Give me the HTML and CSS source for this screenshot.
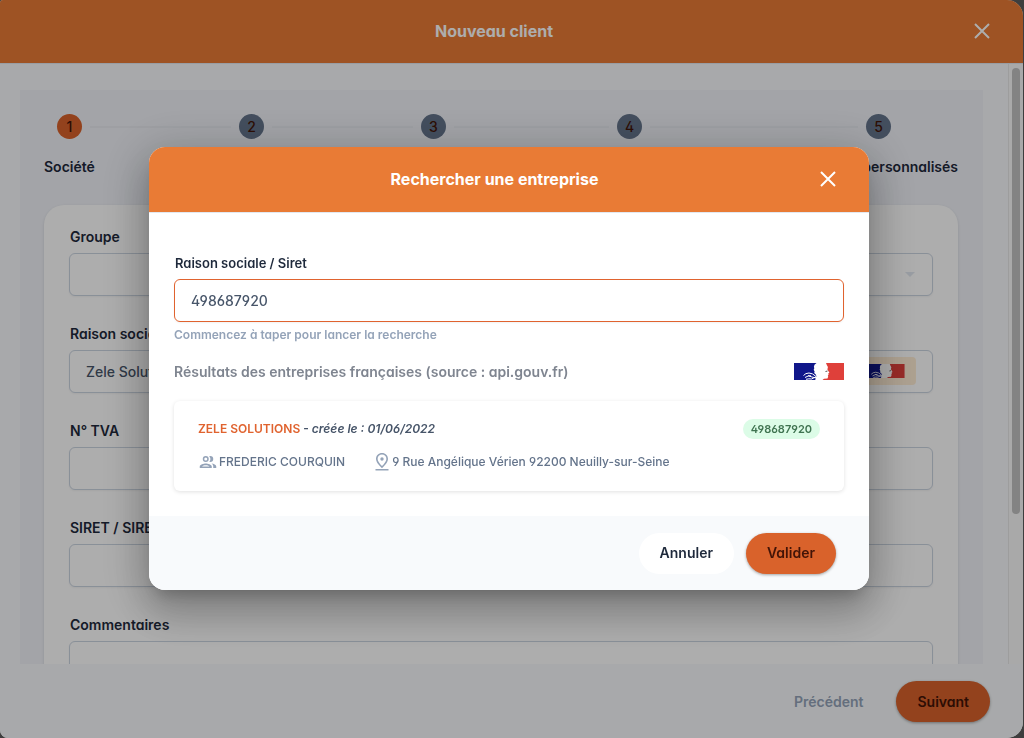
FILE: index.html
```
<!DOCTYPE html>
<html lang="fr">
<head>
<meta charset="utf-8">
<title>Nouveau client</title>
<link rel="stylesheet" href="styles.css">
</head>
<body>
<svg class="defs" aria-hidden="true">
  <symbol id="close" viewBox="0 0 24 24"><path d="M5 5l14 14M19 5L5 19" fill="none" stroke="currentColor" stroke-width="2"/></symbol>
  <symbol id="marianne" viewBox="0 0 50 17">
    <path d="M0 0h50v17H0z" fill="#fff"/>
    <path d="M0 0h22.500l-2 1.800-.6 2 .4 1.500-.6 1.500.9 1.700-.4 1.500 1.600 1.500.7 2-1.600.5 1 1.500-.8 1.500H0z" fill="#10178a"/>
    <path d="M32 0h18v17H28.500l1.500-1.200 3.500-.3.700-2-.4-1 .8-.8-.4-1.200 1.200-.8-2-3.200.5-2.500-1-1.800z" fill="#df403a"/>
    <path d="M9.500 12.500q2-2.500 5.500-2.500t7 3.500M11 14.500q3.500-3 7-.5l4 1M12 16.300q3-.8 5.500-.3l4-2M14 12.800h3" fill="none" stroke="#fff"/>
    <path d="M31.500 8.500l2-.5" fill="none" stroke="#555"/>
  </symbol>
</svg>

<main class="dialog page">
  <header class="bar page-bar">
    <h1 class="title">Nouveau client</h1>
    <button class="close" type="button" aria-label="Fermer"><svg><use href="#close"/></svg></button>
  </header>
  <div class="scroll">
    <section class="panel">
      <div class="track">
        <span class="dot current">1</span><span class="line"></span>
        <span class="dot">2</span><span class="line"></span>
        <span class="dot">3</span><span class="line wide"></span>
        <span class="dot">4</span><span class="line widest"></span>
        <span class="dot">5</span>
      </div>
      <div class="step-labels"><span>Société</span><span>Champs personnalisés</span></div>
      <form class="card">
        <div class="field">
          <label for="groupe">Groupe</label>
          <div class="control">
            <select id="groupe"><option></option></select>
            <svg class="caret" viewBox="0 0 10 5"><path d="M0 0h10L5 5z"/></svg>
          </div>
        </div>
        <div class="field">
          <label for="raison">Raison sociale</label>
          <div class="control">
            <input id="raison" type="text" value="Zele Solutions">
            <button class="gov" type="button" aria-label="Rechercher une entreprise"><svg><use href="#marianne"/></svg></button>
          </div>
        </div>
        <div class="field"><label for="tva">N° TVA</label><input id="tva" type="text"></div>
        <div class="field"><label for="siren">SIRET / SIREN</label><input id="siren" type="text"></div>
        <div class="field"><label for="notes">Commentaires</label><textarea id="notes"></textarea></div>
      </form>
    </section>
    <div class="scrollbar"><div class="thumb"></div></div>
  </div>
  <footer class="actions">
    <button class="btn text" type="button">Précédent</button>
    <button class="btn primary" type="button">Suivant</button>
  </footer>
</main>

<div class="overlay">
  <div class="dialog modal" role="dialog" aria-labelledby="modal-title">
    <header class="bar modal-bar">
      <h2 class="title" id="modal-title">Rechercher une entreprise</h2>
      <button class="close" type="button" aria-label="Fermer"><svg><use href="#close"/></svg></button>
    </header>
    <div class="modal-body">
      <div class="field">
        <label for="query">Raison sociale / Siret</label>
        <input class="active" id="query" type="text" value="498687920">
      </div>
      <p class="hint">Commencez à taper pour lancer la recherche</p>
      <div class="results-head">
        <p>Résultats des entreprises françaises (source : api.gouv.fr)</p>
        <svg class="flag"><use href="#marianne"/></svg>
      </div>
      <article class="result">
        <div class="result-top">
          <p><span class="company">ZELE SOLUTIONS</span> - <em>créée le : 01/06/2022</em></p>
          <span class="badge">498687920</span>
        </div>
        <div class="result-info">
          <span class="info people-info">
            <svg class="people" viewBox="0 0 24 24"><path fill-rule="evenodd" d="M9 12a4 4 0 1 0 0-8 4 4 0 0 0 0 8zm0-6a2 2 0 1 1 0 4 2 2 0 0 1 0-4zM1 18v2h16v-2c0-2.700-5.300-4-8-4s-8 1.300-8 4zM15 12a4 4 0 0 0 0-8c-.5 0-.9.100-1.300.2a6 6 0 0 1 0 7.600c.4.100.8.200 1.300.2zM16.700 14.100c1.400 1 2.300 2.300 2.300 3.900v2h4v-2c0-2.300-3.500-3.500-6.300-3.900zM4 18c1-.9 3-1.600 5-1.600s4 .7 5 1.600z"/></svg>
            FREDERIC COURQUIN
          </span>
          <span class="info">
            <svg class="pin" viewBox="0 0 14 18"><path fill-rule="evenodd" d="M7 0C3.600 0 1 2.600 1 5.900 1 10 7 15 7 15s6-5 6-9.100C13 2.600 10.400 0 7 0zm0 1.600c2.500 0 4.400 1.900 4.400 4.300 0 2.300-2.400 5-4.400 7-2-2-4.400-4.700-4.400-7C2.600 3.500 4.500 1.600 7 1.600zM7 7.700a1.700 1.700 0 1 0 0-3.400 1.700 1.700 0 0 0 0 3.400zM.5 16h13v1.600H.5z"/></svg>
            9 Rue Angélique Vérien 92200 Neuilly-sur-Seine
          </span>
        </div>
      </article>
    </div>
    <footer class="actions">
      <button class="btn plain" type="button">Annuler</button>
      <button class="btn primary" type="button">Valider</button>
    </footer>
  </div>
</div>
</body>
</html>
```

FILE: styles.css
```
* { box-sizing: border-box; }
html, body { height: 100%; }
body {
  margin: 0;
  overflow: hidden;
  background: #5c5c5c;
  color: #1e293b;
  font: 600 14px/20px Inter, "Liberation Sans", sans-serif;
  font-feature-settings: "cv02", "cv03", "cv04", "cv11";
}
h1, h2, p { margin: 0; }
button, input, select, textarea {
  font: inherit;
  font-feature-settings: inherit;
  color: inherit;
}
button { border: 0; padding: 0; background: none; cursor: pointer; }
.defs { position: absolute; width: 0; height: 0; }

.dialog { display: flex; flex-direction: column; overflow: hidden; }
.page {
  height: 100%;
  margin-right: 1px;
  border-radius: 3px 16px 16px 8px;
  background: #fff;
}
.bar { display: flex; align-items: center; flex: none; background: #e97b35; color: #fff; }
.page-bar { height: 64px; padding: 0 29px 2px 18px; border-bottom: 1px solid #e2e8f0; }
.modal-bar { height: 66px; padding: 0 29px 0 24px; border-bottom: 1px solid #e2e8f0; }
.title { flex: 1; text-align: center; font-size: 16px; font-weight: 700; line-height: 24px; }
.close, .close svg { display: block; width: 24px; height: 24px; }

.scroll { display: flex; flex: 1; min-height: 0; overflow: hidden; background: #f8fafc; }
.panel { flex: 1; align-self: flex-start; margin: 26px 25px 0 20px; padding: 24px 25px 24px 24px; background: #f0f2f8; }
.track { display: flex; align-items: center; gap: 8px; padding: 0 67px 0 13px; }
.dot {
  width: 25px; height: 25px; flex: none;
  border-radius: 50%;
  background: #64748b;
  color: #431407;
  text-align: center;
  font-weight: 500;
  line-height: 25px;
}
.dot.current { background: #d9622b; }
.line { flex: 141; height: 2px; background: #e9ebf1; }
.line.wide { flex: 155; }
.line.widest { flex: 208; }
.step-labels { display: flex; justify-content: space-between; padding: 18px 0 28px; }
.card {
  display: flex; flex-direction: column; gap: 28px;
  padding: 22px 25px;
  border-radius: 20px;
  background: #fff;
  box-shadow: 0 1px 3px rgba(0, 0, 0, .12);
}
.field { display: flex; flex-direction: column; gap: 6px; }
.field label { padding-left: 1px; }
.control { display: flex; position: relative; }
input, select, textarea {
  width: 100%; height: 43px;
  padding: 0 16px;
  border: 1px solid #cbd5e1;
  border-radius: 6px;
  background: #fff;
  box-shadow: 0 1px 2px rgba(0, 0, 0, .05);
  font-weight: 500;
  outline: 0;
  appearance: none;
}
textarea { height: 90px; resize: none; display: block; }
.page input { color: #475569; }
.caret { position: absolute; right: 18px; top: 19px; width: 10px; height: 5px; fill: #e2e8f0; }
.gov { position: absolute; right: 17px; top: 7px; padding: 7px 11px; border-radius: 4px; background: #ffedd5; }
.gov svg { display: block; width: 42px; height: 14px; }
.scrollbar { width: 15px; padding: 4px 3px; border-left: 1px solid #e8e8e8; background: #fafafa; }
.thumb { height: 446px; border-radius: 4px; background: #c1c1c1; }

.actions { display: flex; flex: none; justify-content: flex-end; gap: 12px; padding: 17px 33px 16px; background: #f8fafc; }
.btn { height: 41px; padding: 0 21px; border-radius: 21px; }
.btn.text { color: #94a3b8; }
.btn.plain { background: #fff; }
.btn.primary { background: #d9622b; color: #431407; box-shadow: 0 1px 3px rgba(0, 0, 0, .35); }

.overlay {
  position: fixed; inset: 0;
  display: flex; align-items: center; justify-content: center;
  padding: 0 6px 2px 0;
  background: rgba(0, 0, 0, .32);
}
.modal {
  width: 720px; max-width: 90%;
  border-radius: 16px;
  background: #fff;
  box-shadow: 0 11px 15px -7px rgba(0, 0, 0, .2), 0 24px 38px 3px rgba(0, 0, 0, .14), 0 9px 46px 8px rgba(0, 0, 0, .2);
}
.modal-body { padding: 40px 25px 25px; }
.modal .field label { font-size: 13px; }
.modal input { color: #475569; }
.modal input.active { border-color: #e0632f; }
.hint { padding-top: 3px; font-size: 12px; color: #94a3b8; }
.results-head { display: flex; align-items: center; justify-content: space-between; padding: 17px 0 19px; color: #7f8590; }
.flag { width: 50px; height: 17px; }
.result {
  display: flex; flex-direction: column; gap: 13px;
  padding: 18px 24px 19px;
  border-radius: 6px;
  box-shadow: 0 1px 4px rgba(0, 0, 0, .12);
  font-size: 12px;
}
.result-top { display: flex; justify-content: space-between; align-items: center; color: #475569; }
.company { color: #e0632f; }
.badge { padding: 0 8px; border-radius: 10px; background: #dcfce7; color: #3f7350; font-size: 11px; }
.result-info { display: flex; gap: 30px; color: #64748b; font-weight: 500; }
.info { display: flex; align-items: center; gap: 3px; }
.people-info { gap: 2px; padding-left: 1px; }
.info svg { fill: #94a3b8; }
.people { width: 18px; height: 18px; }
.pin { width: 14px; height: 18px; }
```
